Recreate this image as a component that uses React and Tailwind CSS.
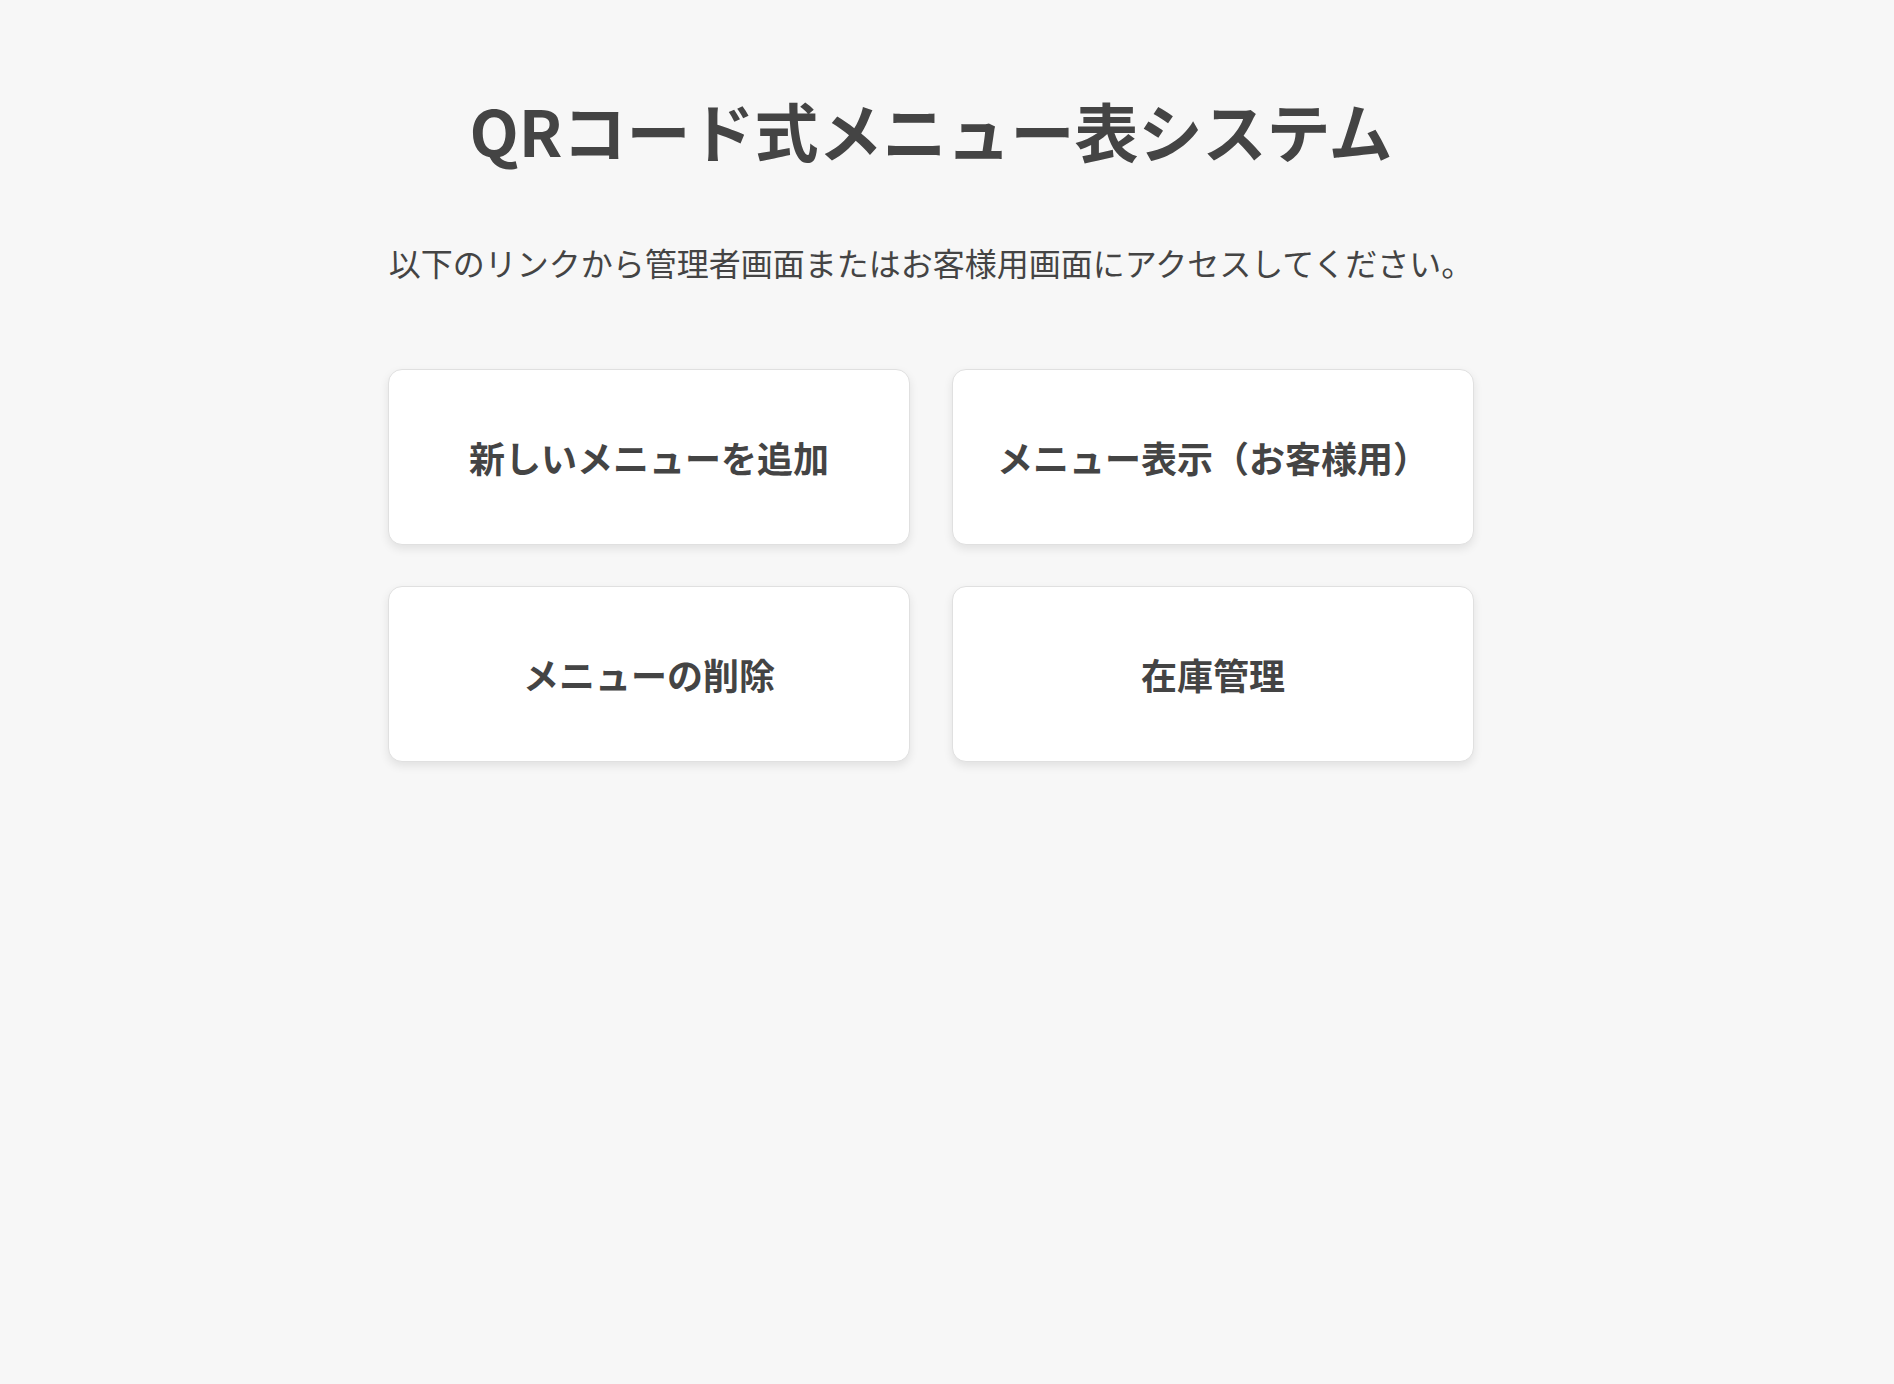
export default function App() {
  const links = [
    '新しいメニューを追加',
    'メニュー表示（お客様用）',
    'メニューの削除',
    '在庫管理',
  ];

  return (
    <div
      className="min-h-screen bg-[#f7f7f7] text-[#444444]"
      style={{ fontFamily: '"Noto Sans CJK JP", "Noto Sans", sans-serif' }}
    >
      <div className="ml-[388px] w-[1086px] pt-[97px]">
        <h1 className="text-center text-[64px] leading-[64px] font-bold">QRコード式メニュー表システム</h1>
        <p className="mt-[85px] text-center text-[32px] leading-[32px]">
          以下のリンクから管理者画面またはお客様用画面にアクセスしてください。
        </p>
        <div className="mt-[91px] grid grid-cols-2 gap-x-[42px] gap-y-[41px]">
          {links.map((label) => (
            <a
              key={label}
              href="#"
              className="flex h-[176px] items-center justify-center rounded-[14px] border border-[#e0e0e0] bg-white text-[36px] font-bold shadow-[0_4px_10px_rgba(0,0,0,0.09)]"
            >
              {label}
            </a>
          ))}
        </div>
      </div>
    </div>
  );
}
